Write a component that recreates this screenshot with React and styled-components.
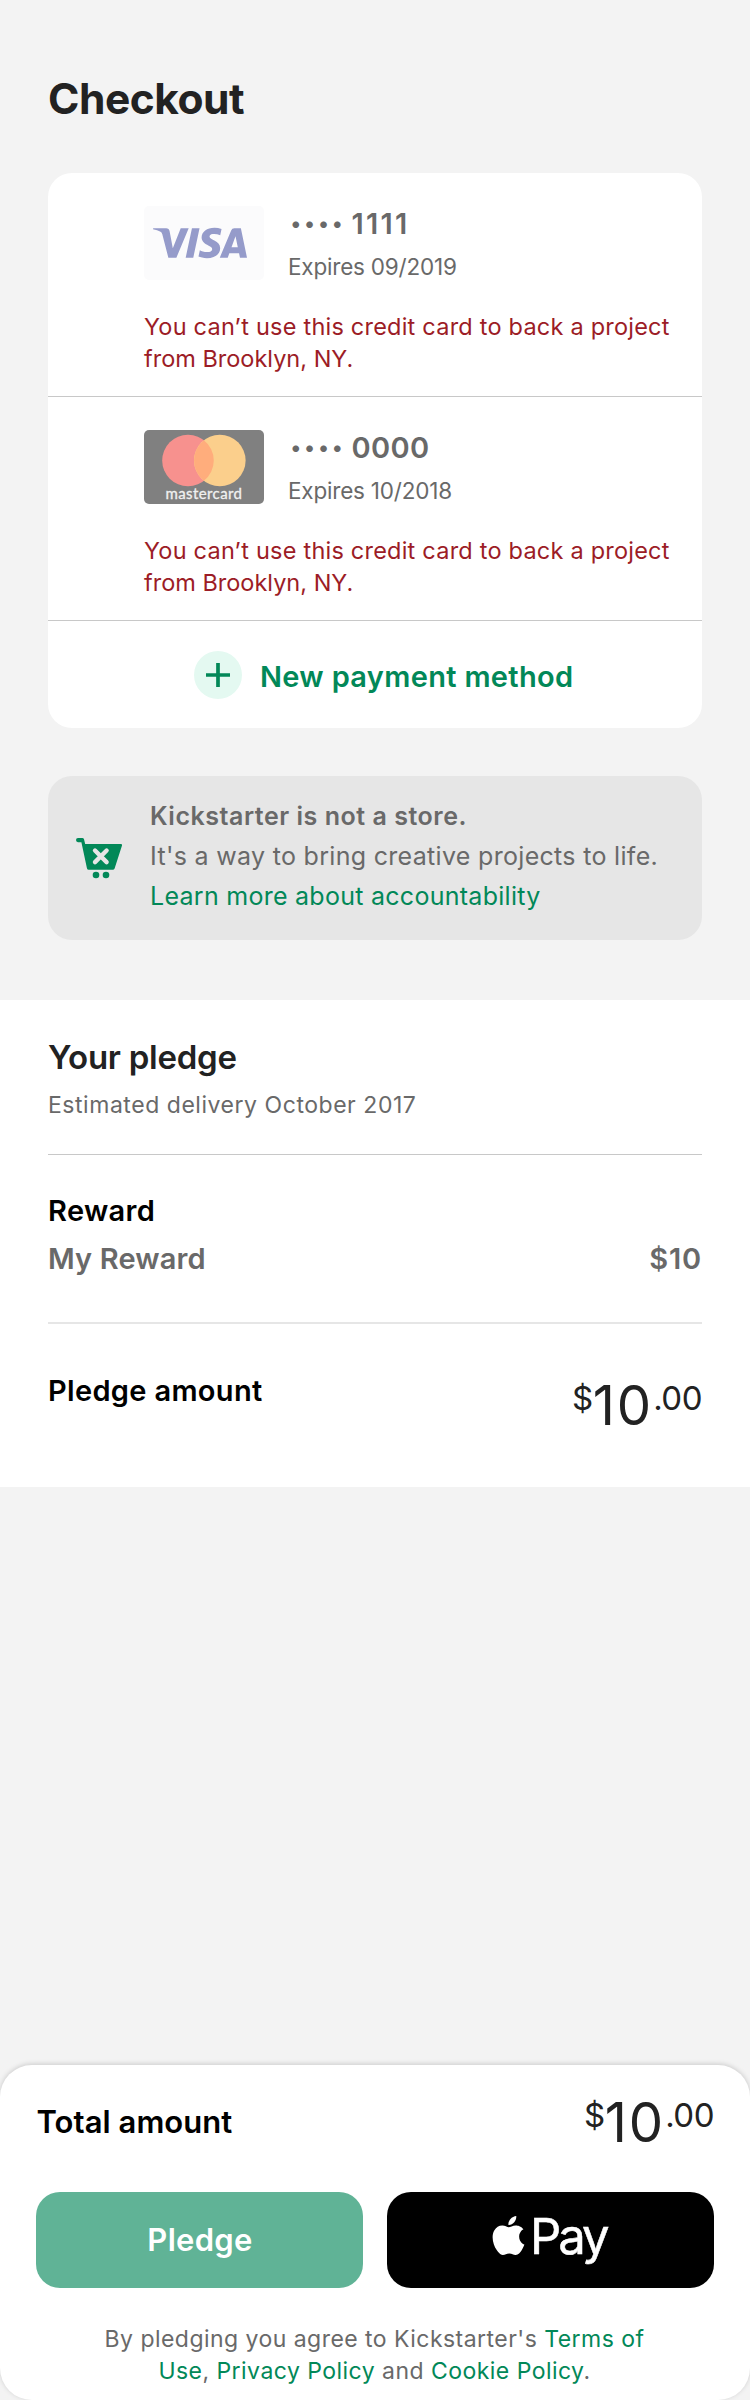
import React from "react";
import styled, { createGlobalStyle } from "styled-components";
import { SiApple, SiVisa } from "react-icons/si";

const color = {
  page: "#f3f3f3",
  notice: "#e6e6e6",
  ink: "#222222",
  muted: "#696969",
  green: "#028858",
  red: "#9c1c26",
  rule: "#c8c8c8",
};

const GlobalStyle = createGlobalStyle`
  * { box-sizing: border-box; }
  body {
    margin: 0;
    background: ${color.page};
    font-family: Inter, "Liberation Sans", sans-serif;
  }
  h1, h2, p { margin: 0; }
`;

const Page = styled.main`
  width: 750px;
  height: 2400px;
  display: flex;
  flex-direction: column;
  background: ${color.page};
  overflow: hidden;
  white-space: nowrap;
`;

const Title = styled.h1`
  margin: 73px 48px 48px;
  font-size: 42.5px;
  line-height: 52px;
  font-weight: 700;
  letter-spacing: -0.5px;
  color: ${color.ink};
`;

const Methods = styled.section`
  margin: 0 48px;
  border-radius: 24px;
  background: #fff;
  overflow: hidden;
`;

const Method = styled.article`
  height: 224px;
  padding: 33px 0 0 96px;
  border-bottom: 1px solid ${color.rule};
`;

const MethodTop = styled.div`
  display: flex;
  height: 76px;
  gap: 24px;
`;

const CardArt = styled.svg`
  width: 120px;
  height: 74px;
  border-radius: 5px;
`;

const VisaArt = styled.div`
  width: 120px;
  height: 74px;
  padding: 0 8px 0 0;
  border-radius: 5px;
  display: flex;
  align-items: center;
  justify-content: center;
  background: #fbfbfc;
  color: #959bca;
`;

const CardNumber = styled.p`
  display: flex;
  font-size: 29px;
  line-height: 36px;
  font-weight: 600;
  color: ${color.muted};
  letter-spacing: ${(p) => p.$spacing};
`;

const Dots = styled.span`
  padding-left: 2.5px;
  width: 63.5px;
  font-size: 21px;
  line-height: 35px;
  letter-spacing: 3.3px;
`;

const Expiry = styled.p`
  margin-top: 9px;
  font-size: 22.5px;
  line-height: 32px;
  letter-spacing: -0.2px;
  color: ${color.muted};
`;

const CardError = styled.p`
  margin-top: 29px;
  font-size: 23.5px;
  line-height: 32px;
  letter-spacing: 0.22px;
  color: ${color.red};
`;

const ErrorTail = styled.span`
  display: block;
  letter-spacing: 0;
`;

const AddMethod = styled.div`
  height: 107px;
  display: flex;
  align-items: center;
  gap: 18px;
  padding-left: 146px;
  color: ${color.green};
`;

const PlusBadge = styled.svg`
  width: 48px;
  height: 48px;
  position: relative;
  top: 0.5px;
`;

const AddLabel = styled.span`
  padding-top: 5px;
  font-size: 29px;
  line-height: 36px;
  font-weight: 600;
  letter-spacing: 0.32px;
`;

const Notice = styled.section`
  margin: 48px 48px 60px;
  height: 164px;
  padding: 20px 0 0 28px;
  display: flex;
  align-items: flex-start;
  gap: 27px;
  border-radius: 24px;
  background: ${color.notice};
`;

const Cart = styled.svg`
  width: 47px;
  height: 41px;
  margin-top: 42px;
`;

const NoticeLine = styled.p`
  font-size: 25px;
  line-height: 40px;
  font-weight: ${(p) => (p.$strong ? 600 : 400)};
  color: ${(p) => (p.$link ? color.green : color.muted)};
  letter-spacing: ${(p) => p.$spacing};
`;

const Summary = styled.section`
  height: 487px;
  padding: 37px 48px 0;
  background: #fff;
`;

const SummaryTitle = styled.h2`
  font-size: 33px;
  line-height: 40px;
  font-weight: 600;
  letter-spacing: -0.25px;
  color: ${color.ink};
`;

const Delivery = styled.p`
  margin-top: 12px;
  padding-bottom: 33px;
  border-bottom: 1px solid ${color.rule};
  font-size: 23px;
  line-height: 32px;
  letter-spacing: 0.54px;
  color: ${color.muted};
`;

const RewardBlock = styled.div`
  height: 169px;
  padding-top: 38px;
  border-bottom: 2px solid ${color.notice};
`;

const Row = styled.div`
  display: flex;
  justify-content: space-between;
  align-items: flex-start;
  margin-top: ${(p) => p.$top || 0}px;
`;

const Label = styled.span`
  display: block;
  font-size: 29px;
  line-height: 36px;
  font-weight: 600;
  letter-spacing: ${(p) => p.$spacing || "0.33px"};
  color: ${(p) => (p.$muted ? color.muted : "#000")};
`;

const PledgeLabel = styled(Label)`
  margin-top: -2px;
`;

const TotalLabel = styled(Label)`
  margin-top: 10px;
  padding-left: 0.5px;
  font-size: 31px;
  line-height: 40px;
`;

const Amount = styled.span`
  display: flex;
  align-items: flex-start;
  color: ${color.ink};
`;

const Whole = styled.span`
  font-size: 54.5px;
  line-height: 60px;
  letter-spacing: 2px;
`;

const Minor = styled.span`
  margin-top: 3px;
  font-size: 33px;
  line-height: 40px;
  letter-spacing: -0.5px;
`;

const Footer = styled.footer`
  margin-top: auto;
  height: 335px;
  padding: 27px 36px 0;
  border-radius: 32px;
  background: #fff;
  box-shadow: 0 -1px 5px rgba(0, 0, 0, 0.17);
`;

const Buttons = styled.div`
  display: grid;
  grid-template-columns: 1fr 1fr;
  gap: 24px;
  margin-top: 40px;
`;

const Button = styled.button`
  height: 96px;
  padding: 0;
  border: 0;
  border-radius: 24px;
  display: flex;
  align-items: center;
  justify-content: center;
  font-family: inherit;
  color: #fff;
`;

const PledgeButton = styled(Button)`
  background: #60b396;
  padding-left: 1px;
  font-size: 31px;
  line-height: 40px;
  font-weight: 600;
  letter-spacing: 0.3px;
`;

const PayButton = styled(Button)`
  gap: 1.5px;
  padding-right: 5px;
  background: #000;
`;

const AppleMark = styled(SiApple)`
  width: 39px;
  height: 39px;
  margin-top: -9px;
`;

const PayWord = styled.span`
  margin-top: -6px;
  font-size: 49px;
  line-height: 60px;
  letter-spacing: -3px;
  -webkit-text-stroke: 0.5px #fff;
`;

const Terms = styled.p`
  margin-top: 35px;
  padding-right: 1px;
  font-size: 23px;
  line-height: 32px;
  letter-spacing: 0.46px;
  text-align: center;
  color: ${color.muted};
`;

const TermsLink = styled.span`
  color: ${color.green};
`;

function Mastercard() {
  return (
    <CardArt viewBox="0 0 120 74">
      <rect width="120" height="74" fill="#808080" />
      <circle cx="44" cy="30.5" r="25.8" fill="#f7918e" />
      <circle cx="75.8" cy="30.5" r="25.8" fill="#fbcf8c" />
      <path d="M59.9 10.2a25.8 25.8 0 0 1 0 40.6a25.8 25.8 0 0 1 0-40.6z" fill="#ffad7c" />
      <text
        x="21.5"
        y="69"
        fontFamily="Lato"
        fontWeight="400"
        fontSize="15"
        fill="#f0f0f0"
        stroke="#f0f0f0"
        strokeWidth="0.3"
        textLength="76.5"
      >
        mastercard
      </text>
    </CardArt>
  );
}

function PaymentMethod({ art, digits, spacing, expires }) {
  return (
    <Method>
      <MethodTop>
        {art}
        <div>
          <CardNumber $spacing={spacing}>
            <Dots>••••</Dots>
            {digits}
          </CardNumber>
          <Expiry>Expires {expires}</Expiry>
        </div>
      </MethodTop>
      <CardError>
        You can’t use this credit card to back a project
        <ErrorTail>from Brooklyn, NY.</ErrorTail>
      </CardError>
    </Method>
  );
}

function Price() {
  return (
    <Amount>
      <Minor>$</Minor>
      <Whole>10</Whole>
      <Minor>.00</Minor>
    </Amount>
  );
}

export default function App() {
  return (
    <>
      <GlobalStyle />
      <Page>
        <Title>Checkout</Title>

        <Methods>
          <PaymentMethod
            art={
              <VisaArt>
                <SiVisa size={94} />
              </VisaArt>
            }
            digits="1111"
            spacing="2.2px"
            expires="09/2019"
          />
          <PaymentMethod art={<Mastercard />} digits="0000" spacing="0.37px" expires="10/2018" />
          <AddMethod>
            <PlusBadge viewBox="0 0 48 48">
              <circle cx="24" cy="24" r="24" fill="#e4f9f1" />
              <path d="M24 12v24M12 24h24" stroke={color.green} strokeWidth="3.7" />
            </PlusBadge>
            <AddLabel>New payment method</AddLabel>
          </AddMethod>
        </Methods>

        <Notice>
          <Cart viewBox="0 0 47 41">
            <path
              fill={color.green}
              d="M2 0H6.3Q7.6 0 8 1.3L9.2 6H45Q46.6 6 46 7.6L38.6 30.4Q38.1 31.8 36.8 31.8H12.6Q11.4 31.8 11 30.4L5.4 4.2H2A2 2.1 0 0 1 2 0z"
            />
            <circle cx="20" cy="37" r="3.3" fill={color.green} />
            <circle cx="30" cy="37" r="3.3" fill={color.green} />
            <path
              d="M19 12.5l11.6 11.6M30.6 12.5l-11.6 11.6"
              stroke={color.notice}
              strokeWidth="4.4"
              strokeLinecap="round"
            />
          </Cart>
          <div>
            <NoticeLine $strong $spacing="0.53px">Kickstarter is not a store.</NoticeLine>
            <NoticeLine $spacing="0.31px">It's a way to bring creative projects to life.</NoticeLine>
            <NoticeLine $link $spacing="0.27px">Learn more about accountability</NoticeLine>
          </div>
        </Notice>

        <Summary>
          <SummaryTitle>Your pledge</SummaryTitle>
          <Delivery>Estimated delivery October 2017</Delivery>
          <RewardBlock>
            <Label>Reward</Label>
            <Row $top={12}>
              <Label $muted $spacing="0.13px">My Reward</Label>
              <Label $muted $spacing="0.8px">$10</Label>
            </Row>
          </RewardBlock>
          <Row $top={51}>
            <PledgeLabel>Pledge amount</PledgeLabel>
            <Price />
          </Row>
        </Summary>

        <Footer>
          <Row>
            <TotalLabel $spacing="0.05px">Total amount</TotalLabel>
            <Price />
          </Row>
          <Buttons>
            <PledgeButton>Pledge</PledgeButton>
            <PayButton>
              <AppleMark />
              <PayWord>Pay</PayWord>
            </PayButton>
          </Buttons>
          <Terms>
            By pledging you agree to Kickstarter's <TermsLink>Terms of</TermsLink>
            <br />
            <TermsLink>Use</TermsLink>, <TermsLink>Privacy Policy</TermsLink> and{" "}
            <TermsLink>Cookie Policy</TermsLink>.
          </Terms>
        </Footer>
      </Page>
    </>
  );
}
